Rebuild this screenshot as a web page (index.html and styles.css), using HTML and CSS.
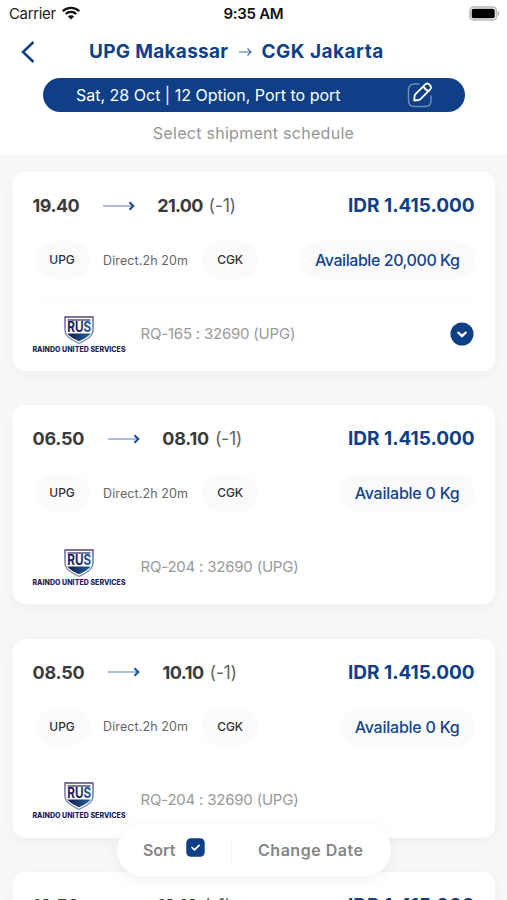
FILE: index.html
```html
<!DOCTYPE html>
<html lang="en">
<head>
<meta charset="utf-8">
<title>Shipment schedule</title>
<link rel="stylesheet" href="styles.css">
</head>
<body>
<svg class="defs" aria-hidden="true">
  <defs>
    <linearGradient id="steel" x1="0" y1="0" x2="0" y2="1">
      <stop offset="0" stop-color="#4a477f"/><stop offset="1" stop-color="#7e9cbc"/>
    </linearGradient>
    <linearGradient id="sea" x1="0" y1="0" x2="1" y2="0">
      <stop offset="0" stop-color="#16184f"/><stop offset="1" stop-color="#1e6499"/>
    </linearGradient>
    <linearGradient id="letters" x1="0" y1="0" x2="1" y2="0">
      <stop offset="0.4" stop-color="#221d5e"/><stop offset="1" stop-color="#1d5f9c"/>
    </linearGradient>
    <symbol id="arrow" viewBox="0 0 32 12">
      <path d="M0 6H30" stroke="#8ba6d3" stroke-width="1.5" fill="none"/>
      <path d="M26.500 2.200 30.300 6l-3.800 3.800" stroke="#174a98" stroke-width="2" fill="none"/>
    </symbol>
    <symbol id="shield" viewBox="0 0 30 28">
      <path d="M1 1H29V14C29 21 21 24.500 15 27.500C9 24.500 1 21 1 14Z" fill="#fff" stroke="url(#steel)" stroke-width="1.300"/>
      <path d="M3.500 4H26.500" stroke="#25225f" stroke-width="1.200"/>
      <path d="M3.500 17.500H26.500C24.500 21 19.500 22.800 15 25.300C10.500 22.800 5.500 21 3.500 17.500Z" fill="url(#sea)"/>
      <text x="3.200" y="16.300" textLength="24" lengthAdjust="spacingAndGlyphs" class="shield-text">RUS</text>
    </symbol>
  </defs>
</svg>
<div class="screen">
  <header class="header">
    <div class="status">
      <div class="carrier"><span>Carrier</span>
        <svg width="18" height="14" viewBox="0 0 18 14" fill="none" stroke="#111" stroke-width="2.300"><path d="M.8 5.100C5.300.7 12.700.7 17.200 5.100M3.700 8C6.600 5.200 11.400 5.200 14.300 8"/><path d="M9 13.500 5.900 10.400C7.500 8.900 10.500 8.900 12.100 10.400Z" fill="#111" stroke="none"/></svg>
      </div>
      <div class="clock">9:35 AM</div>
      <svg class="battery" width="31" height="15" viewBox="0 0 31 15"><rect x="1" y="1" width="26.400" height="13" rx="3.800" fill="#fff" stroke="#b8b8b8" stroke-width="1.600"/><rect x="2.700" y="2.800" width="23" height="9.400" rx="1.800" fill="#000"/><path d="M28.800 5v5c1.900-.8 1.900-4.200 0-5Z" fill="#aaa"/></svg>
    </div>
    <div class="route">
      <svg class="back" width="14" height="22" viewBox="0 0 14 22"><path d="M12.500 1 2 11 12.500 21" fill="none" stroke="#0e3f87" stroke-width="2.500"/></svg>
      <h1>UPG Makassar</h1>
      <svg class="route-arrow" width="13" height="10" viewBox="0 0 13 10" fill="none" stroke="#416aa4" stroke-width="1.200"><path d="M0 5H12M8.500 1.500 12 5 8.500 8.500"/></svg>
      <h1 class="to">CGK Jakarta</h1>
    </div>
    <div class="summary">
      <span>Sat, 28 Oct | 12 Option, Port to port</span>
      <svg width="26" height="26" viewBox="0 0 26 26" fill="none" stroke-linejoin="round" stroke-linecap="round"><path d="M12 2H7.500C3.500 2 1.500 4 1.500 8V18.500C1.500 22.500 3.500 24.500 7.500 24.500H18C22 24.500 24 22.500 24 18.500V14" stroke="#6f8bb9" stroke-width="1.500"/><path d="M18.300 2.300 8.500 12.100C8 12.600 7.700 13.300 7.600 14L7.200 18.500L11.600 18C12.300 17.900 13 17.600 13.500 17.100L23.200 7.300C25.800 4.500 21-.3 18.300 2.300ZM16.500 4.100C17.200 6.600 18.900 8.300 21.400 9" stroke="#fff" stroke-width="1.800"/></svg>
    </div>
    <p class="hint">Select shipment schedule</p>
  </header>

  <main class="list">
    <article class="card">
      <div class="times"><b class="one">19.40</b><svg class="arrow"><use href="#arrow"/></svg><b class="tight">21.00</b><span class="day">(-1)</span><strong>IDR 1.415.000</strong></div>
      <div class="stops"><span class="port">UPG</span><span class="direct">Direct.2h 20m</span><span class="port cgk">CGK</span><span class="avail long">Available 20,000 Kg</span></div>
      <div class="carrier-row line">
        <div class="logo"><svg width="30" height="28"><use href="#shield"/></svg><span>RAINDO UNITED SERVICES</span></div>
        <span class="flight">RQ-165 : 32690 (UPG)</span>
        <svg class="expand" width="24" height="24" viewBox="0 0 24 24"><circle cx="12" cy="12" r="11.500" fill="#0e3f87"/><path d="M8.300 10.700 12 14.200l3.700-3.500" fill="none" stroke="#fff" stroke-width="2.300" stroke-linecap="round" stroke-linejoin="round"/></svg>
      </div>
    </article>
    <article class="card">
      <div class="times"><b>06.50</b><svg class="arrow"><use href="#arrow"/></svg><b>08.10</b><span class="day">(-1)</span><strong>IDR 1.415.000</strong></div>
      <div class="stops"><span class="port">UPG</span><span class="direct">Direct.2h 20m</span><span class="port cgk">CGK</span><span class="avail">Available 0 Kg</span></div>
      <div class="carrier-row">
        <div class="logo"><svg width="30" height="28"><use href="#shield"/></svg><span>RAINDO UNITED SERVICES</span></div>
        <span class="flight">RQ-204 : 32690 (UPG)</span>
      </div>
    </article>
    <article class="card">
      <div class="times"><b>08.50</b><svg class="arrow"><use href="#arrow"/></svg><b class="one">10.10</b><span class="day">(-1)</span><strong>IDR 1.415.000</strong></div>
      <div class="stops"><span class="port">UPG</span><span class="direct">Direct.2h 20m</span><span class="port cgk">CGK</span><span class="avail">Available 0 Kg</span></div>
      <div class="carrier-row">
        <div class="logo"><svg width="30" height="28"><use href="#shield"/></svg><span>RAINDO UNITED SERVICES</span></div>
        <span class="flight">RQ-204 : 32690 (UPG)</span>
      </div>
    </article>
    <article class="card">
      <div class="times"><b class="one">10.50</b><svg class="arrow"><use href="#arrow"/></svg><b class="one">12.10</b><span class="day">(-1)</span><strong>IDR 1.415.000</strong></div>
    </article>
  </main>

  <nav class="toolbar">
    <span class="sort">Sort</span>
    <svg width="19" height="19" viewBox="0 0 19 19"><rect x=".3" y=".3" width="18.400" height="18.400" rx="4.500" fill="#0e3f87"/><path d="M6 9.500l2.500 2.400 4.600-4.500" fill="none" stroke="#fff" stroke-width="1.700" stroke-linecap="round" stroke-linejoin="round"/></svg>
    <i class="sep"></i>
    <span class="change">Change Date</span>
  </nav>
</div>
</body>
</html>
```
FILE: styles.css
```css
* { box-sizing: border-box; margin: 0; }
body { font-family: Inter, "Liberation Sans", sans-serif; background: #f8f8f8; overflow: hidden; }
.defs { position: absolute; width: 0; height: 0; }
.screen { position: relative; width: 507px; height: 900px; overflow: hidden; background: #f8f8f8; }
svg { flex: none; display: block; }
span, b, strong, h1 { white-space: nowrap; }

.header { height: 155px; background: #fff; display: flex; flex-direction: column; }
.status { height: 28px; display: grid; grid-template-columns: 1fr 62px 1fr; align-items: center; padding: 0 7px 2px 9px; }
.carrier { display: flex; align-items: center; gap: 6px; font-size: 15px; letter-spacing: -.35px; color: #222; }
.clock { font-size: 15px; font-weight: 600; letter-spacing: -.3px; color: #111; }
.battery { justify-self: end; }
.route { height: 48px; display: flex; align-items: center; padding-left: 21px; }
.route h1 { font-size: 19px; font-weight: 700; letter-spacing: .3px; color: #0e3f87; margin-left: 54px; line-height: 24px; margin-top: -1px; }
.route .to { margin-left: 9px; letter-spacing: .5px; }
.route-arrow { margin-left: 11px; }
.summary { width: 422px; height: 34px; margin: 2px 0 0 43px; border-radius: 17px; background: #0e3f87; display: flex; align-items: center; padding-left: 33px; gap: 66px; color: #fff; font-size: 16px; }
.hint { margin-top: 11px; line-height: 21px; text-align: center; font-size: 16px; letter-spacing: .28px; color: #969696; }

.list { display: grid; gap: 34.300px; padding: 17px 12.500px 0 13px; }
.card { height: 199px; border-radius: 12px; background: #fff; box-shadow: 0 4px 16px rgba(0, 0, 0, .045); padding: 14px 20px 0 19.500px; }
.times { height: 39px; display: flex; align-items: center; }
.times b { font-size: 18px; font-weight: 700; letter-spacing: -.22px; color: #3b3b3b; }
.times .one { letter-spacing: -.5px; }
.times .tight { letter-spacing: -.7px; }
.arrow { width: 32px; height: 12px; margin: 0 22px 0 24px; }
.day { margin-left: 6px; font-size: 18px; font-weight: 400; letter-spacing: -.4px; color: #666; }
.times strong { margin-left: auto; font-size: 19px; font-weight: 700; letter-spacing: -.03px; color: #0e3f87; }
.stops { height: 38px; margin-top: 16px; padding-left: 3px; display: flex; align-items: center; }
.port { width: 54px; height: 38px; line-height: 38px; border-radius: 19px; background: #fbfbfb; text-align: center; font-size: 12px; font-weight: 500; letter-spacing: -.1px; color: #333; }
.port:first-child { text-indent: -1px; }
.cgk { width: 56px; }
.direct { margin: 0 14px 0 13.500px; font-size: 12.500px; letter-spacing: .11px; color: #666; }
.avail { margin-left: auto; height: 38px; line-height: 38px; padding: 0 15px; border-radius: 19px; background: #fbfbfb; font-size: 16px; font-weight: 500; letter-spacing: -.23px; color: #15458b; }
.long { letter-spacing: -.44px; }
.carrier-row { margin-top: 18px; height: 72px; border-top: 1px solid transparent; display: flex; align-items: center; }
.line { border-color: #fafafa; }
.logo { width: 93px; padding-top: 2px; display: flex; flex-direction: column; align-items: center; gap: 2px; }
.logo span { font-size: 7px; font-weight: 800; line-height: 8px; letter-spacing: .04px; color: #211b5c; }
.shield-text { font: 700 14px Inter, "Liberation Sans", sans-serif; fill: url(#letters); }
.flight { margin-left: 15px; margin-top: -1px; font-size: 15px; letter-spacing: -.21px; color: #999; }
.expand { margin-left: auto; margin-right: 1px; }

.toolbar { position: absolute; left: 117px; top: 824px; width: 274px; height: 52px; border-radius: 26px; background: #fff; box-shadow: 0 3px 16px rgba(0, 0, 0, .06); display: flex; align-items: center; padding-left: 26px; color: #858585; font-size: 16px; font-weight: 600; }
.sort { width: 43px; letter-spacing: -.05px; }
.toolbar svg { margin-top: -5px; }
.sep { width: 1px; height: 28px; margin: 0 26px; background: #f7f7f7; }
.change { letter-spacing: .52px; }
```
